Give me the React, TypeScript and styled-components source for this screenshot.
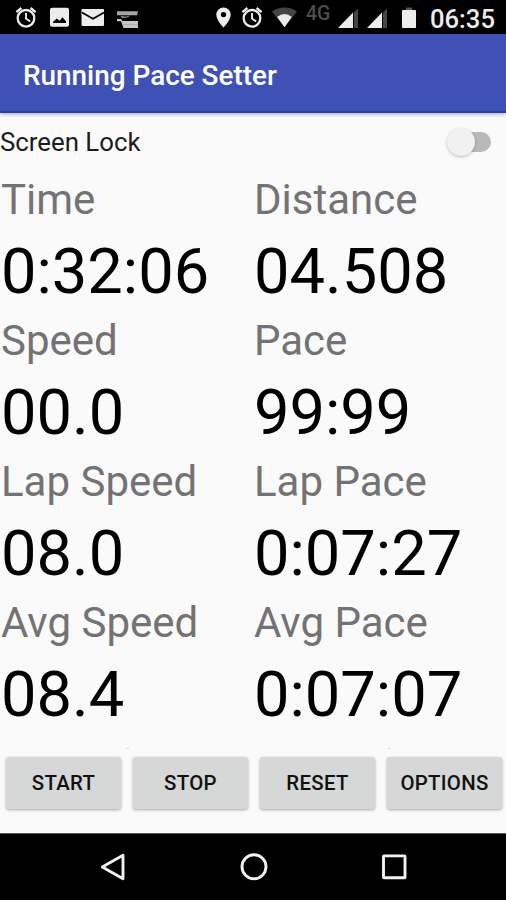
import React from 'react';
import styled, { createGlobalStyle } from 'styled-components';

const GlobalStyle = createGlobalStyle`
  *, *::before, *::after { box-sizing: border-box; }
  body { margin: 0; background: #fafafa; }
`;

const Screen = styled.div`
  width: 506px;
  height: 900px;
  display: flex;
  flex-direction: column;
  overflow: hidden;
  background: #fafafa;
  color: #000;
  font-family: Roboto, sans-serif;
`;

const StatusBar = styled.header`
  height: 34px;
  flex: none;
  display: flex;
  justify-content: space-between;
  padding: 0 10px 0 15px;
  background: #000;
  color: #ececec;
`;

const StatusGroup = styled.div`
  display: flex;
  height: 34px;
`;

const Glyph = styled.svg<{ $gap?: number }>`
  display: block;
  flex: none;
  margin-left: ${(p) => p.$gap ?? 0}px;
  fill: #ececec;
`;

const Network = styled.span`
  width: 26px;
  margin-left: 9px;
  font-size: 19.5px;
  font-weight: 500;
  line-height: 28px;
  color: #4d4d4d;
`;

const Clock = styled.time`
  width: 66px;
  margin-left: 14px;
  font-size: 25.6px;
  font-weight: 500;
  line-height: 39px;
  white-space: nowrap;
`;

const AppBar = styled.div`
  height: 79px;
  flex: none;
  display: flex;
  align-items: center;
  padding: 6px 23px 0;
  background: #3f51b5;
  border-bottom: 2px solid #2b40a6;
  box-shadow: 0 1px 4px rgba(0, 0, 0, 0.35);
`;

const Title = styled.h1`
  margin: 0;
  font-size: 27.9px;
  font-weight: 500;
  line-height: 34px;
  color: #fff;
  white-space: nowrap;
`;

const LockRow = styled.label`
  height: 62px;
  flex: none;
  display: flex;
  align-items: flex-start;
  justify-content: space-between;
  padding: 12px 14px 0 0;
  font-size: 25.8px;
  line-height: 34px;
  color: #1c1c1c;
`;

const SwitchTrack = styled.span`
  width: 40px;
  height: 20px;
  margin-top: 7px;
  margin-right: 1px;
  display: flex;
  align-items: center;
  border-radius: 10px;
  background: linear-gradient(90deg, transparent 14px, #b9b9b9 14px);
`;

const SwitchThumb = styled.span`
  width: 28px;
  height: 28px;
  flex: none;
  margin-left: -4px;
  border-radius: 50%;
  background: #f1f1f1;
  box-shadow: 0 1px 3px rgba(0, 0, 0, 0.25);
`;

const Metrics = styled.main`
  flex: none;
  display: grid;
  grid-template-columns: 253px 253px;
  grid-auto-rows: 141px;
`;

const Metric = styled.section`
  padding-left: 1px;
  white-space: nowrap;
`;

const Label = styled.div`
  height: 59px;
  font-size: 42px;
  line-height: 50px;
  color: #737373;
`;

const Value = styled.div`
  font-size: 63.2px;
  line-height: 74px;
`;

const Ticks = styled.div`
  height: 18px;
  flex: none;
  display: flex;
  gap: 259px;
  padding: 9px 0 0 126px;
`;

const Tick = styled.i`
  width: 3px;
  height: 1px;
  background: #dedede;
`;

const Actions = styled.div`
  flex: 1;
  display: grid;
  grid-template-columns: repeat(4, 115px);
  gap: 12px;
  align-content: start;
  padding: 0 0 0 6px;
`;

const ActionButton = styled.button`
  height: 52px;
  margin: 0;
  padding: 0;
  border: 0;
  border-radius: 3px;
  background: #d6d7d7;
  box-shadow: 0 1px 3px rgba(0, 0, 0, 0.34);
  color: #111;
  font: 500 20.4px / 24px Roboto, sans-serif;
  letter-spacing: 0.3px;
  text-align: center;
  white-space: nowrap;
`;

const NavBar = styled.nav`
  height: 67px;
  flex: none;
  display: flex;
  align-items: center;
  justify-content: center;
  gap: 108px;
  padding-left: 1px;
  background: #000;
  border-top: 1px solid #555;
`;

const NavIcon = styled.svg`
  display: block;
  width: 32px;
  height: 32px;
  fill: none;
  stroke: #f2f2f2;
  stroke-width: 2.9;
  stroke-linejoin: round;
`;

const AlarmIcon = ({ gap }: { gap?: number }) => (
  <Glyph $gap={gap} width="22" height="34" viewBox="0 0 22 34">
    <g fill="none" stroke="#ececec">
      <circle cx="11" cy="18.3" r="8.3" strokeWidth="2.3" />
      <path d="M11 13v5.5l4.2 3" strokeWidth="1.9" />
      <path d="M1.4 12.2L6.4 8M20.6 12.2L15.6 8" strokeWidth="2.3" />
    </g>
  </Glyph>
);

const SignalIcon = ({ gap }: { gap: number }) => (
  <Glyph $gap={gap} width="20" height="34" viewBox="0 0 20 34">
    <path d="M20 8.5V28H16V12.5z" fill="#454545" />
    <path d="M15 12.5V28H0z" />
  </Glyph>
);

const metrics = [
  ['Time', '0:32:06'],
  ['Distance', '04.508'],
  ['Speed', '00.0'],
  ['Pace', '99:99'],
  ['Lap Speed', '08.0'],
  ['Lap Pace', '0:07:27'],
  ['Avg Speed', '08.4'],
  ['Avg Pace', '0:07:07'],
];

const actions = ['START', 'STOP', 'RESET', 'OPTIONS'];

export default function App() {
  return (
    <Screen>
      <GlobalStyle />
      <StatusBar>
        <StatusGroup>
          <AlarmIcon />
          <Glyph $gap={13} width="19" height="34" viewBox="0 0 19 34">
            <path
              fillRule="evenodd"
              d="M2 7.7h15a2 2 0 0 1 2 2v15.1a2 2 0 0 1-2 2H2a2 2 0 0 1-2-2V9.7a2 2 0 0 1 2-2zM3 23h13v-1.7l-3.6-4.1-2.7 3.5-3-2.3L3 22z"
            />
          </Glyph>
          <Glyph $gap={12} width="24" height="34" viewBox="0 0 24 34">
            <rect x="0.5" y="9" width="22.5" height="17" rx="1" />
            <path d="M1 12.5l11 6.3 11-6.3" fill="none" stroke="#000" strokeWidth="1.7" />
          </Glyph>
          <Glyph $gap={12} width="22" height="34" viewBox="0 0 22 34">
            <path d="M0 11.3h21l-1 3.9H0z" fill="#a6a6a6" />
            <path d="M4 16.5q4 1.8 8-.5" fill="none" stroke="#8c8c8c" strokeWidth="1.4" />
            <path d="M0 19h4l1.5 2H21v7H6.5L4 21.2H0z" fill="#c6c6c6" />
            <path d="M6 24.5h15" stroke="#a0a0a0" strokeWidth="0.6" />
          </Glyph>
        </StatusGroup>
        <StatusGroup>
          <Glyph width="15" height="34" viewBox="0 0 15 34">
            <path
              fillRule="evenodd"
              d="M7.5 7.5A7.2 7.2 0 0 0 .3 14.7C.3 20 7.5 27.5 7.5 27.5s7.2-7.5 7.2-12.8A7.2 7.2 0 0 0 7.5 7.5zm0 4.4a2.7 2.7 0 1 1 0 5.4 2.7 2.7 0 0 1 0-5.4z"
            />
          </Glyph>
          <AlarmIcon gap={10} />
          <Glyph $gap={9} width="25" height="34" viewBox="0 0 25 34">
            <path d="M0 11.6C7.5 6.2 17.5 6.2 25 11.6L12.5 27.3z" fill="#454545" />
            <path d="M5.2 17Q12.5 10.8 19.8 17L12.5 27.3z" />
          </Glyph>
          <Network>4G</Network>
          <SignalIcon gap={6} />
          <SignalIcon gap={9} />
          <Glyph $gap={15} width="14" height="34" viewBox="0 0 14 34">
            <path d="M4 7.5h6v3H4z" fill="#555" />
            <rect x="0" y="10" width="14" height="18" rx="0.8" />
          </Glyph>
          <Clock>06:35</Clock>
        </StatusGroup>
      </StatusBar>
      <AppBar>
        <Title>Running Pace Setter</Title>
      </AppBar>
      <LockRow>
        Screen Lock
        <SwitchTrack role="switch" aria-checked="false">
          <SwitchThumb />
        </SwitchTrack>
      </LockRow>
      <Metrics>
        {metrics.map(([label, value]) => (
          <Metric key={label}>
            <Label>{label}</Label>
            <Value>{value}</Value>
          </Metric>
        ))}
      </Metrics>
      <Ticks>
        <Tick />
        <Tick />
      </Ticks>
      <Actions>
        {actions.map((name) => (
          <ActionButton key={name}>{name}</ActionButton>
        ))}
      </Actions>
      <NavBar>
        <NavIcon viewBox="0 0 32 32">
          <path d="M4.3 16L25 4.2V27.8z" />
        </NavIcon>
        <NavIcon viewBox="0 0 32 32">
          <circle cx="16" cy="15.7" r="12" />
        </NavIcon>
        <NavIcon viewBox="0 0 32 32">
          <rect x="5.5" y="4.9" width="21.5" height="21.8" rx="0.5" />
        </NavIcon>
      </NavBar>
    </Screen>
  );
}
